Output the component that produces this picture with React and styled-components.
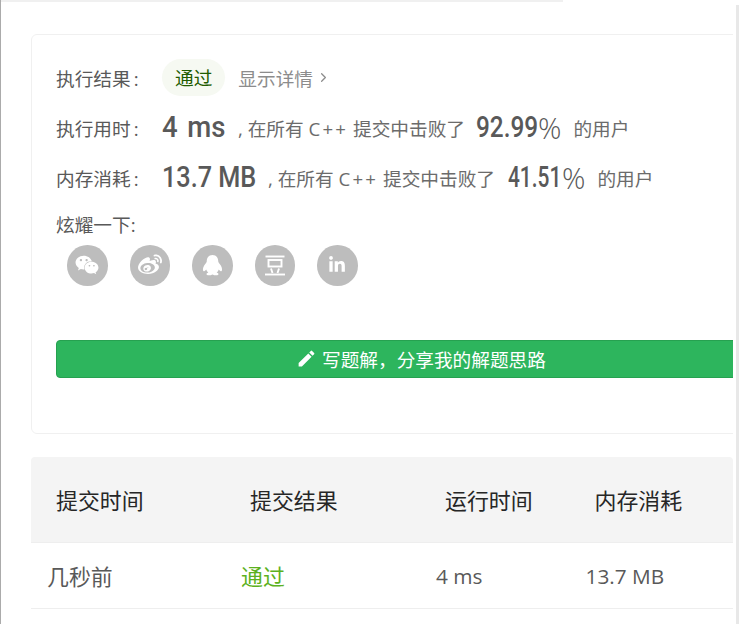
import React from "react";
import styled, { createGlobalStyle } from "styled-components";
import { FaWeixin, FaWeibo, FaLinkedinIn } from "react-icons/fa";
import { MdEdit } from "react-icons/md";
import { ChevronRight } from "lucide-react";

const Global = createGlobalStyle`
  html, body {
    margin: 0;
    height: 100%;
    background: #fff;
    overflow: hidden;
  }
  * { box-sizing: border-box; }
`;

const font = `"Open Sans", "Noto Sans CJK SC", sans-serif`;

const Page = styled.div`
  width: 739px;
  height: 624px;
  border-left: 1px solid #ababab;
  font-family: ${font};
  color: #595959;
  overflow: hidden;
  display: flex;
`;
const Main = styled.div`
  width: 735px;
  flex: none;
`;
const Scrollbar = styled.div`
  width: 3px;
  margin-top: 5px;
  background: #e8e8e8;
`;
const TopLine = styled.div`
  width: 562px;
  height: 2px;
  background: #f0f0f0;
`;
const Content = styled.div`
  width: 702px;
  margin: 32px 0 0 30px;
  overflow: hidden;
`;
const Card = styled.div`
  width: 740px;
  height: 400px;
  border: 1px solid #f0f0f0;
  border-radius: 6px;
  padding: 23px 0 0 24px;
`;
const Row = styled.div`
  display: flex;
  align-items: center;
  height: 38px;
  margin-bottom: ${(p) => p.$gap || 12}px;
  font-size: 18.67px;
  white-space: nowrap;
`;
const Label = styled.span`
  width: 106px;
  flex: none;
  color: #595959;
`;
const Colon = styled.span`
  margin-left: 3px;
`;
const Pill = styled.span`
  background: #f6f9f2;
  color: #1f5c00;
  border-radius: 19px;
  padding: 0 13px;
  height: 37px;
  line-height: 37px;
  margin-right: 13px;
`;
const Detail = styled.span`
  display: flex;
  align-items: center;
  color: #8c8c8c;
`;
const Chevron = styled(ChevronRight)`
  margin-left: 3px;
`;
const Big = styled.strong`
  display: inline-block;
  flex: none;
  width: ${(p) => p.$w}px;
  margin-right: ${(p) => p.$mr || 0}px;
  font-family: "Roboto", sans-serif;
  font-weight: 500;
  font-size: 29px;
  color: #595959;
  word-spacing: ${(p) => p.$ws || 0}px;
  transform: scaleX(${(p) => p.$sx});
  transform-origin: left center;
`;
const Percent = styled.span`
  font-family: "Open Sans", sans-serif;
  font-weight: 300;
  font-size: 29px;
  margin: 0 12px 0 2px;
  color: #595959;
`;
const Muted = styled.span`
  color: #6b6b6b;
  margin-right: ${(p) => p.$mr || 0}px;
`;
const Plus = styled.span`
  letter-spacing: 2.2px;
`;
const ShareTitle = styled.div`
  font-size: 18.67px;
  line-height: 26px;
`;
const Shares = styled.div`
  display: flex;
  gap: 22px;
  margin: 7px 0 0 11px;
`;
const ShareIcon = styled.div`
  width: 40.5px;
  height: 40.5px;
  border-radius: 50%;
  background: #bdbdbd;
  color: #fff;
  display: flex;
  align-items: center;
  justify-content: center;
  font-size: ${(p) => p.$size || 24}px;
`;
const WriteButton = styled.div`
  margin-top: 54px;
  width: 700px;
  height: 38px;
  background: #2db55d;
  border: 1px solid #26a150;
  border-radius: 4px;
  color: #fff;
  font-size: 18.67px;
  display: flex;
  align-items: center;
  padding-left: 239px;
  gap: 5px;
`;
const Table = styled.div`
  margin: 23px 0 0 30px;
  width: 702px;
`;
const cols = "194px 195px 149.5px 1fr";
const Head = styled.div`
  display: grid;
  grid-template-columns: ${cols};
  height: 86px;
  align-items: center;
  background: #f4f4f4;
  border-bottom: 1px solid #eee;
  border-radius: 4px 4px 0 0;
  color: #262626;
  font-size: 21.9px;
`;
const HeadCell = styled.div`
  padding-left: 25px;
`;
const Body = styled.div`
  display: grid;
  grid-template-columns: ${cols};
  height: 66px;
  align-items: center;
  border-bottom: 1px solid #eee;
  color: #595959;
`;
const Cell = styled.div`
  padding-left: 16px;
  font-size: ${(p) => p.$size || 21.9}px;
  color: ${(p) => p.$color || "inherit"};
`;

const DoubanIcon = () => (
  <svg width="20" height="21" viewBox="0 0 20 21" fill="none" stroke="#fff" strokeWidth="1.9">
    <path d="M0.5 1.5H19.5" />
    <rect x="3.5" y="5" width="13" height="6.5" />
    <path d="M6 13.5L7.5 18M14 13.5L12.5 18" />
    <path d="M0 19.5H20" />
  </svg>
);

const QqIcon = () => (
  <svg width="25" height="25" viewBox="0 0 24 24" fill="#fff">
    <path d="M12 2C8 2 6.5 5 6.5 8C6.5 9 5.5 10 4 12C2.5 14.5 2.5 17 3.5 17.5C4.2 17.5 5.2 16.8 6 15.8C6.3 17 7 18 8 18.8C6.5 19.3 5.8 20 6.5 20.8C7.5 21.8 10.5 21.5 12 20.6C13.5 21.5 16.5 21.8 17.5 20.8C18.2 20 17.5 19.3 16 18.8C17 18 17.7 17 18 15.8C18.8 16.8 19.8 17.5 20.5 17.5C21.5 17 21.5 14.5 20 12C18.5 10 17.5 9 17.5 8C17.5 5 16 2 12 2Z" />
  </svg>
);

export default function App() {
  return (
    <Page>
      <Global />
      <Main>
        <TopLine />
        <Content>
          <Card>
            <Row>
              <Label>执行结果<Colon>:</Colon></Label>
              <Pill>通过</Pill>
              <Detail>
                显示详情
                <Chevron size={15} strokeWidth={2} />
              </Detail>
            </Row>
            <Row>
              <Label>执行用时<Colon>:</Colon></Label>
              <Big $w={62} $mr={14} $sx={0.95} $ws={3}>4 ms</Big>
              <Muted $mr={11}>, 在所有 <Plus>C++</Plus> 提交中击败了</Muted>
              <Big $w={60} $sx={0.84}>92.99</Big>
              <Percent>%</Percent>
              <Muted>的用户</Muted>
            </Row>
            <Row $gap={16}>
              <Label>内存消耗<Colon>:</Colon></Label>
              <Big $w={93} $mr={13} $sx={0.87}>13.7 MB</Big>
              <Muted $mr={13}>, 在所有 <Plus>C++</Plus> 提交中击败了</Muted>
              <Big $w={52} $sx={0.72}>41.51</Big>
              <Percent>%</Percent>
              <Muted>的用户</Muted>
            </Row>
            <ShareTitle>炫耀一下:</ShareTitle>
            <Shares>
              <ShareIcon><FaWeixin /></ShareIcon>
              <ShareIcon><FaWeibo /></ShareIcon>
              <ShareIcon><QqIcon /></ShareIcon>
              <ShareIcon><DoubanIcon /></ShareIcon>
              <ShareIcon $size={18}><FaLinkedinIn /></ShareIcon>
            </Shares>
            <WriteButton>
              <MdEdit size={21} />
              写题解，分享我的解题思路
            </WriteButton>
          </Card>
        </Content>
        <Table>
          <Head>
            <HeadCell>提交时间</HeadCell>
            <HeadCell>提交结果</HeadCell>
            <HeadCell>运行时间</HeadCell>
            <HeadCell>内存消耗</HeadCell>
          </Head>
          <Body>
            <Cell>几秒前</Cell>
            <Cell $color="#5cb120">通过</Cell>
            <Cell $size={20.8}>4 ms</Cell>
            <Cell $size={20.8}>13.7 MB</Cell>
          </Body>
        </Table>
      </Main>
      <Scrollbar />
    </Page>
  );
}
